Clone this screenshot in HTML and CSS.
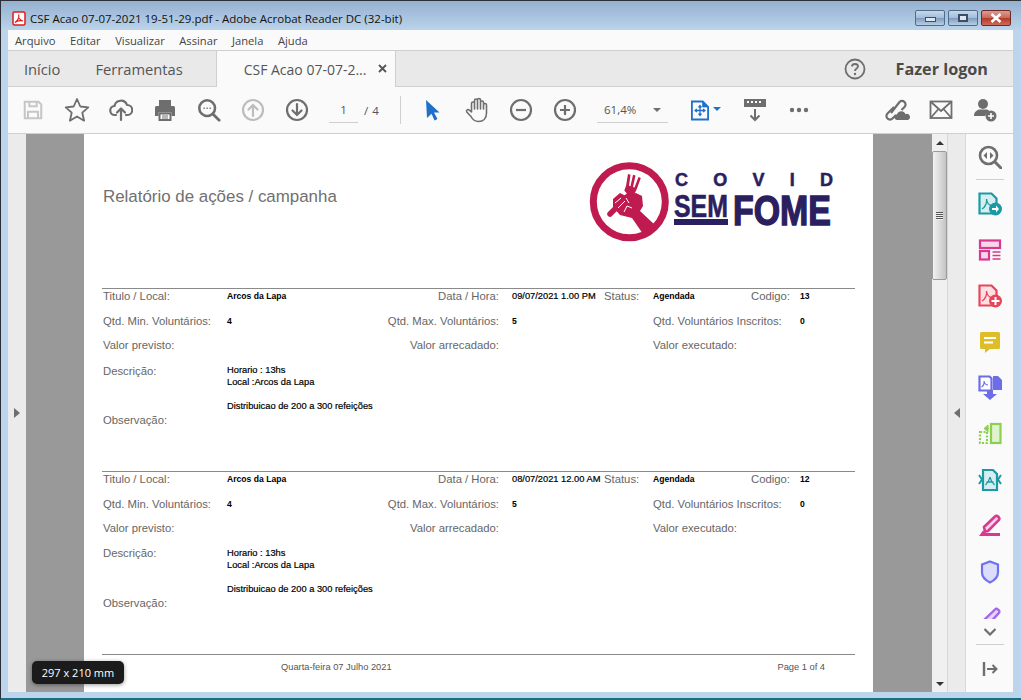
FILE: index.html
```html
<!DOCTYPE html>
<html lang="pt">
<head>
<meta charset="utf-8">
<title>CSF Acao</title>
<link rel="stylesheet" href="styles.css">
</head>
<body>
<div class="window">
  <header class="titlebar">
    <svg class="app-icon" viewBox="0 0 14 15"><rect x="1" y="1" width="12" height="13" rx="1.500" fill="#fff" stroke="#e01b1b" stroke-width="1.500"/><path d="M3 11.500C5.500 10 7.500 6.500 6.700 3.500 6.500 6.500 8 9.500 11 10 8.500 9.500 5 9.500 3 11.500Z" fill="none" stroke="#e01b1b" stroke-width="1.200"/></svg>
    <span class="title-text">CSF Acao 07-07-2021 19-51-29.pdf - Adobe Acrobat Reader DC (32-bit)</span>
    <div class="win-controls">
      <div class="win-btn"><span class="glyph-min"></span></div>
      <div class="win-btn"><span class="glyph-max"></span></div>
      <div class="win-btn win-close"><svg width="14" height="10" viewBox="0 0 14 10"><path d="M2.500 1l9 8M11.500 1l-9 8" stroke="#fff" stroke-width="2.600"/></svg></div>
    </div>
  </header>
  <nav class="menubar">
    <span>Arquivo</span><span>Editar</span><span>Visualizar</span><span>Assinar</span><span>Janela</span><span>Ajuda</span>
  </nav>
  <div class="tabbar">
    <span class="tab">Início</span>
    <span class="tab tab-tools">Ferramentas</span>
    <div class="tab-active"><span class="tab-name">CSF Acao 07-07-2...</span><svg class="tab-x" width="9" height="9" viewBox="0 0 9 9"><path d="M1 1l7 7M8 1l-7 7" stroke="#555" stroke-width="1.800"/></svg></div>
    <div class="tab-right">
      <svg class="help" width="22" height="22" viewBox="0 0 22 22"><circle cx="11" cy="11" r="9.500" fill="none" stroke="#6e6e6e" stroke-width="1.800"/><path d="M8 8.500C8 6.500 9.500 6 11 6s3 1 3 2.500c0 2-3 2-3 4.500" fill="none" stroke="#6e6e6e" stroke-width="1.800"/><circle cx="11" cy="16" r="1.200" fill="#6e6e6e"/></svg>
      <span class="login">Fazer logon</span>
    </div>
  </div>
  <div class="toolbar">
    <div class="tool"><svg width="22" height="22" viewBox="0 0 24 24" fill="none" stroke="#c6c6c6" stroke-width="2.200"><path d="M3 3h15l3 3v15H3z"/><path d="M8 3v5h8V3M6.500 21v-7h11v7"/></svg></div>
    <div class="tool"><svg width="26" height="26" viewBox="0 0 26 26" fill="none" stroke="#6e6e6e" stroke-width="1.800" stroke-linejoin="round"><path d="M13 2l3.300 7.500 8 .8-6 5.400 1.800 8L13 19.500 5.900 23.700l1.800-8-6-5.400 8-.8z"/></svg></div>
    <div class="tool"><svg width="24" height="24" viewBox="0 0 24 24" fill="none" stroke="#6e6e6e" stroke-width="2.200" stroke-linecap="round" stroke-linejoin="round"><path d="M7 17H6A4.500 4.500 0 0 1 5.500 8 6.500 6.500 0 0 1 18 7a5 5 0 0 1 .5 10H17"/><path d="M12 22V11M8 14.500l4-4 4 4"/></svg></div>
    <div class="tool"><svg width="24" height="24" viewBox="0 0 24 24"><path d="M6 2h12v6H6zM2 9.500Q2 8 3.500 8h17Q22 8 22 9.500V18h-3.500v-3.500h-13V18H2z" fill="#6e6e6e"/><path d="M6.500 15.500h11V22h-11z" fill="#fff" stroke="#6e6e6e" stroke-width="2"/><path d="M9 18h6M9 20h6" stroke="#6e6e6e"/></svg></div>
    <div class="tool"><svg width="24" height="24" viewBox="0 0 26 26" fill="none" stroke="#6e6e6e" stroke-width="2.800"><circle cx="11" cy="11" r="8.500"/><path d="M17.500 17.500l6.500 6.500" stroke-linecap="round" stroke-width="3"/><path d="M7 11h1.400M10.300 11h1.400M13.600 11H15" stroke-width="1.600"/></svg></div>
    <div class="tool"><svg width="24" height="24" viewBox="0 0 24 24" fill="none" stroke="#bdbdbd" stroke-width="2.200"><circle cx="12" cy="12" r="10"/><path d="M12 18V7M7.500 11.500L12 7l4.500 4.500" stroke-linecap="round"/></svg></div>
    <div class="tool"><svg width="24" height="24" viewBox="0 0 24 24" fill="none" stroke="#6e6e6e" stroke-width="2.200"><circle cx="12" cy="12" r="10"/><path d="M12 6v11M7.500 12.500L12 17l4.500-4.500" stroke-linecap="round"/></svg></div>
    <div class="page-nav"><span class="page-input">1</span><span class="page-total">/ 4</span></div>
    <div class="tb-sep"></div>
    <div class="tool"><svg width="16" height="22" viewBox="0 0 16 22"><path d="M1 1l13.500 12.500H9l3.500 6.500-3 1.500-3-6.700L2 19z" fill="#1f70c8"/></svg></div>
    <div class="tool"><svg width="24" height="26" viewBox="0 0 24 26" fill="none" stroke="#6e6e6e" stroke-width="1.600" stroke-linecap="round" stroke-linejoin="round"><path d="M6.500 15V6.500a1.500 1.500 0 0 1 3 0V3.500a1.500 1.500 0 0 1 3 0V3a1.500 1.500 0 0 1 3 0v2.500a1.500 1.500 0 0 1 3 0V8a1.500 1.500 0 0 1 3 0v8c0 5-3 8.500-8 8.500-4 0-6-2-7.500-5L1.800 15c-1-2 1-3.200 2.500-1.800zM9.500 6.500V12M12.500 3.500V12M15.500 5v7M18.500 7v5"/></svg></div>
    <div class="tool"><svg width="24" height="24" viewBox="0 0 24 24" fill="none" stroke="#6e6e6e" stroke-width="2.200"><circle cx="12" cy="12" r="10"/><path d="M7 12h10"/></svg></div>
    <div class="tool"><svg width="24" height="24" viewBox="0 0 24 24" fill="none" stroke="#6e6e6e" stroke-width="2.200"><circle cx="12" cy="12" r="10"/><path d="M7 12h10M12 7v10"/></svg></div>
    <div class="zoom-box"><span>61,4%</span><i class="caret"></i></div>
    <div class="fit"><svg width="18" height="21" viewBox="0 0 20 22" fill="none" stroke="#1f70c8" stroke-width="2"><path d="M1 1h12l6 6v14H1z"/><path d="M13 1v6h6" fill="#1f70c8" stroke-width="1"/><path d="M10 6v10M5 11h10M8.300 7.500L10 5.500l1.700 2M8.300 14.500L10 16.500l1.700-2M6.500 9.300L4.500 11l2 1.700M13.500 9.300l2 1.700-2 1.700" stroke-width="1.400"/></svg><i class="caret caret-blue"></i></div>
    <div class="tool tool-wide"><svg width="24" height="24" viewBox="0 0 24 24"><rect x="1" y="1" width="22" height="8" fill="#6e6e6e"/><path d="M4 4h16" stroke="#fff" stroke-width="2" stroke-dasharray="2 2"/><path d="M12 11v11M7.500 17.500L12 22l4.500-4.500" fill="none" stroke="#6e6e6e" stroke-width="2"/></svg></div>
    <div class="tool"><svg width="20" height="6" viewBox="0 0 20 6" fill="#6e6e6e"><circle cx="3" cy="3" r="2.200"/><circle cx="10" cy="3" r="2.200"/><circle cx="17" cy="3" r="2.200"/></svg></div>
    <div class="tb-right">
      <div class="tool"><svg width="26" height="24" viewBox="0 0 26 24" fill="none" stroke="#6e6e6e" stroke-width="2.200"><path d="M10 9L3.500 15.500a3.500 3.500 0 0 0 0 5 3.500 3.500 0 0 0 5 0L12 17"/><path d="M7 15l8.500-11a3.500 3.500 0 0 1 5 0 3.500 3.500 0 0 1 0 5l-3 3"/><path d="M12.500 22a3 3 0 0 1 .5-5.800 4.500 4.500 0 0 1 8.500 0A3 3 0 0 1 24 22z" fill="#6e6e6e" stroke="none"/></svg></div>
      <div class="tool"><svg width="24" height="20" viewBox="0 0 24 20" fill="none" stroke="#6e6e6e" stroke-width="1.800"><rect x="1.500" y="1.500" width="21" height="16.500"/><path d="M1.500 1.500L12 11 22.500 1.500M1.500 18l8-9M22.500 18l-8-9"/></svg></div>
      <div class="tool"><svg width="26" height="24" viewBox="0 0 26 24"><circle cx="11" cy="6" r="5" fill="#6e6e6e"/><path d="M2 18c0-4 3-6 5-6.500h8c1 .3 2 1 2.500 2A7 7 0 0 0 13 18z" fill="#6e6e6e"/><circle cx="19" cy="18" r="5.500" fill="#6e6e6e"/><path d="M16 18h6M19 15v6" stroke="#fff" stroke-width="1.600"/></svg></div>
    </div>
  </div>
  <div class="workspace">
    <div class="side-left"><i class="tri-right"></i></div>
    <main class="canvas">
      <article class="page">
        <div class="page-head">
          <h1 class="report-title">Relatório de ações / campanha</h1>
          <svg class="logo" width="270" height="100" viewBox="0 0 270 100">
            <circle cx="49.300" cy="51.700" r="36" fill="none" stroke="#bf1b50" stroke-width="7"/>
            <path d="M46 36l2-12 2.500.7-1.500 11 1.500.5 2.500-11.500 2.500.8-2.500 11.500 1.500.5 4-10.500 2.300 1-4 11-3 6.500-6-1-3.500-4z" fill="#bf1b50"/>
            <path d="M48 46L30 64" stroke="#bf1b50" stroke-width="5.500" stroke-linecap="round"/>
            <path d="M33 49l7-6 6 3 10-3 6 3 1 10-3 5 15 14-12 9-11-16-12-3-7-8z" fill="#bf1b50"/>
            <path d="M35 53l6-5M38 58l7-7M44 62l3-6 5 2M46 48l3 5" stroke="#fff" stroke-width="1" fill="none"/>
            <text class="logo-covid" x="95" y="36" textLength="158">COVID</text>
            <text class="logo-sem" x="94" y="66.500" textLength="54" lengthAdjust="spacingAndGlyphs">SEM</text>
            <rect x="94" y="69" width="54" height="6" fill="#2a2060"/>
            <text class="logo-fome" x="153" y="75" textLength="98" lengthAdjust="spacingAndGlyphs">FOME</text>
          </svg>
        </div>

        <section class="record">
          <span class="lb">Titulo / Local:</span><b class="val">Arcos da Lapa</b><span class="lb right">Data / Hora:</span><span class="date">09/07/2021 1.00 PM</span><span class="lb">Status:</span><b class="val">Agendada</b><span class="lb">Codigo:</span><b class="val">13</b>
          <span class="lb">Qtd. Min. Voluntários:</span><b class="val">4</b><span class="lb right">Qtd. Max. Voluntários:</span><b class="val pad">5</b><span class="lb inscr">Qtd. Voluntários Inscritos:</span><b class="val">0</b>
          <span class="lb c1">Valor previsto:</span><span class="lb right c3">Valor arrecadado:</span><span class="lb inscr">Valor executado:</span>
          <span class="lb c1">Descrição:</span><div class="desc">Horario : 13hs<br>Local :Arcos da Lapa<br><br>Distribuicao de 200 a 300 refeições</div>
          <span class="lb obs">Observação:</span>
        </section>

        <section class="record">
          <span class="lb">Titulo / Local:</span><b class="val">Arcos da Lapa</b><span class="lb right">Data / Hora:</span><span class="date">08/07/2021 12.00 AM</span><span class="lb">Status:</span><b class="val">Agendada</b><span class="lb">Codigo:</span><b class="val">12</b>
          <span class="lb">Qtd. Min. Voluntários:</span><b class="val">4</b><span class="lb right">Qtd. Max. Voluntários:</span><b class="val pad">5</b><span class="lb inscr">Qtd. Voluntários Inscritos:</span><b class="val">0</b>
          <span class="lb c1">Valor previsto:</span><span class="lb right c3">Valor arrecadado:</span><span class="lb inscr">Valor executado:</span>
          <span class="lb c1 lb-up">Descrição:</span><div class="desc">Horario : 13hs<br>Local :Arcos da Lapa<br><br>Distribuicao de 200 a 300 refeições</div>
          <span class="lb obs">Observação:</span>
        </section>

        <footer class="page-foot"><span class="foot-date">Quarta-feira 07 Julho 2021</span><span class="foot-page">Page 1 of 4</span></footer>
      </article>
      <div class="size-tip">297 x 210 mm</div>
    </main>
    <div class="scrollbar">
      <button class="sb-arrow"><i class="sb-up"></i></button>
      <div class="sb-track"><div class="sb-thumb"><i class="grip"></i></div></div>
      <button class="sb-arrow"><i class="sb-down"></i></button>
    </div>
    <div class="side-handle"><i class="tri-left"></i></div>
    <aside class="tools">
      <div class="rail-top"><svg width="24" height="24" viewBox="0 0 24 24" fill="none" stroke="#6e6e6e" stroke-width="2.600"><circle cx="10.500" cy="10.500" r="8.500"/><path d="M17 17l6 6" stroke-linecap="round" stroke-width="3"/><path d="M9 7l-3.500 3.500L9 14zM12 7l3.500 3.500L12 14z" fill="#6e6e6e" stroke="none"/></svg></div>
      <div class="rail-list">
        <div class="rail-item"><svg width="24" height="24" viewBox="0 0 24 24"><path d="M1.500 1.500h12l5 5v15h-17z" fill="#d6eef0" stroke="#1b9aa5" stroke-width="2.200"/><path d="M4 17c3-2 5-6 4.500-10 .5 4 3 6.500 6 7" fill="none" stroke="#1b9aa5" stroke-width="1.300"/><circle cx="17.500" cy="17" r="6.500" fill="#1b9aa5"/><path d="M14 16h4v-2.500l3 3.500-3 3.500V18h-4z" fill="#fff"/></svg></div>
        <div class="rail-item"><svg width="24" height="24" viewBox="0 0 24 24" fill="#f8d5e8" stroke="#d8388f" stroke-width="2.200"><rect x="2" y="2.500" width="20" height="7.500"/><rect x="2" y="13" width="9" height="8.500"/><path d="M14.500 14h8M14.500 17.500h8M14.500 21h8" stroke-width="1.400"/></svg></div>
        <div class="rail-item"><svg width="24" height="24" viewBox="0 0 24 24"><path d="M1.500 1.500h12l5 5v15h-17z" fill="#fde0e3" stroke="#e8455a" stroke-width="2.200"/><path d="M4 17c3-2 5-6 4.500-10 .5 4 3 6.500 6 7" fill="none" stroke="#e8455a" stroke-width="1.300"/><circle cx="17.500" cy="17" r="6.500" fill="#e8455a"/><path d="M13.500 17h8M17.500 13v8" stroke="#fff" stroke-width="2"/></svg></div>
        <div class="rail-item"><svg width="24" height="24" viewBox="0 0 24 24"><path d="M2 3.500Q2 2 3.500 2h17Q22 2 22 3.500v14q0 1.500-1.500 1.500H12l-5 4v-4H3.500Q2 19 2 17.500z" fill="#dfbd27"/><path d="M6 8h12M6 12.500h9" stroke="#fff" stroke-width="1.800"/></svg></div>
        <div class="rail-item"><svg width="24" height="26" viewBox="0 0 24 26"><path d="M1.500 1.500h10l2 2v12h-12z" fill="#fff" stroke="#6d6de8" stroke-width="2.200"/><path d="M3.500 12c1.500-1 3-3.500 2.500-6 .5 2.500 2 4 4 4" fill="none" stroke="#6d6de8" stroke-width="1.100"/><path d="M15 1h5l4 4v10H15z" fill="#6d6de8"/><path d="M9 15h6v4h4l-7 6-7-6h4z" fill="#6d6de8"/></svg></div>
        <div class="rail-item"><svg width="24" height="24" viewBox="0 0 24 24" fill="none" stroke="#8bd050" stroke-width="2.200"><rect x="13" y="2" width="9.500" height="19" fill="#dff3cf"/><path d="M2 10h7v11H2z" stroke-dasharray="2 1.500"/><path d="M10 3L6 6.500 10 10zM8 6.500h3" fill="#8bd050" stroke-width="1"/></svg></div>
        <div class="rail-item"><svg width="24" height="24" viewBox="0 0 24 24" fill="none" stroke="#1b9aa5" stroke-width="2.200"><path d="M5 2h10l4 4v16H5z" fill="#d6eef0"/><path d="M7.500 17c2-2 4-5 4.500-8 .5 3 2.500 6 4.500 8M8.500 14h7" stroke-width="1.300"/><path d="M1 7l3 4.500-3 4.500M23 7l-3 4.500 3 4.500" stroke-width="2"/></svg></div>
        <div class="rail-item"><svg width="24" height="24" viewBox="0 0 24 24"><path d="M6 13L17 2.500a2 2 0 0 1 3 0l.7.7a2 2 0 0 1 0 3L10 17l-3 .5z" fill="#f8d5e8" stroke="#d8388f" stroke-width="2.600"/><path d="M1 22l4-5.500 3 2.500h14v3z" fill="#d8388f"/></svg></div>
        <div class="rail-item"><svg width="24" height="24" viewBox="0 0 24 24"><path d="M12 1.500l8 3v8c0 5-4 8-8 10-4-2-8-5-8-10v-8z" fill="#dcdcfb" stroke="#6f72f0" stroke-width="2.200"/></svg></div>
        <div class="rail-item"><svg width="24" height="24" viewBox="0 0 24 24"><path d="M5 15L17 3.500a2 2 0 0 1 3 0l.7.7a2 2 0 0 1 0 3L9 20l-4 1z" fill="#e6d3f8" stroke="#a268e8" stroke-width="2.400"/></svg></div>
      </div>
      <div class="rail-more"><svg width="14" height="8" viewBox="0 0 14 8" fill="none" stroke="#6e6e6e" stroke-width="2.200"><path d="M1.500 1L7 6.500 12.500 1"/></svg></div>
      <div class="rail-foot"><svg width="16" height="16" viewBox="0 0 16 16" fill="none" stroke="#6e6e6e" stroke-width="2"><path d="M2 1v14" stroke-width="2.400"/><path d="M5 8h9M10.500 4L14.500 8l-4 4"/></svg></div>
    </aside>
  </div>
</div>
</body>
</html>
```

FILE: styles.css
```css
* { box-sizing: border-box; }
html, body { margin: 0; height: 100%; }
body { width: 1021px; height: 700px; overflow: hidden; background: #b9d2ea; font-family: "Open Sans", "Noto Sans", sans-serif; }
.window { width: 1021px; height: 700px; display: flex; flex-direction: column; border-top: 1px solid #2b3036; border-left: 1px solid #2b3036; border-bottom: 2px solid #1d6f80; background: linear-gradient(#94b1cf 0, #bcd5ec 30px); padding: 0 7px 6px 7px; }

.titlebar { height: 29px; flex: none; display: flex; align-items: center; padding-top: 6px; }
.app-icon { width: 14px; height: 15px; margin-left: 4px; margin-right: 4px; }
.title-text { font-size: 11.500px; color: #111; white-space: nowrap; }
.win-controls { margin-left: auto; display: flex; gap: 3px; margin-right: 3px; align-self: flex-start; margin-top: 3px; }
.win-btn { width: 30px; height: 16px; border: 1px solid #4f6b8c; border-radius: 2px; background: linear-gradient(#c5d8ec 0, #a4bdd8 48%, #7f9cbc 52%, #b8cfe6 100%); display: flex; align-items: center; justify-content: center; }
.win-close { background: linear-gradient(#dd9b90 0, #c9695a 48%, #b23a2c 52%, #cf6a58 100%); border-color: #6d2a26; }
.glyph-min { width: 11px; height: 5px; border: 1px solid #3d4f66; background: #dbe6f2; margin-top: 3px; }
.glyph-max { width: 10px; height: 8px; border: 2px solid #3d4f66; background: #dbe6f2; }

.menubar { height: 21px; flex: none; background: #fafafa; display: flex; gap: 14.500px; align-items: center; padding-left: 7px; padding-top: 1px; font-size: 11.200px; color: #444; border-bottom: 1px solid #cfcfcf; margin-right: 1px; }
.tabbar { height: 36px; flex: none; background: #e9e9e9; display: flex; align-items: center; border-bottom: 1px solid #cfcfcf; font-size: 14.700px; color: #555; margin-right: 1px; }
.tab { margin-left: 16px; white-space: nowrap; }
.tab-tools { margin-left: 35px; }
.tab-active { width: 180px; height: 36px; margin-left: 33px; margin-bottom: -1px; background: #fafafa; border-left: 1px solid #cfcfcf; border-right: 1px solid #cfcfcf; display: flex; align-items: center; padding-left: 27px; color: #555; position: relative; font-size: 14px; }
.tab-name { white-space: nowrap; }
.tab-x { position: absolute; right: 8px; top: 13px; }
.tab-right { margin-left: auto; display: flex; align-items: center; gap: 30px; padding-right: 25px; }
.help { display: block; }
.login { font-size: 16.200px; font-weight: 700; color: #4a4a4a; white-space: nowrap; }

.toolbar { height: 47px; flex: none; background: #fafafa; display: flex; align-items: center; padding-left: 3px; border-bottom: 1px solid #cfcfcf; margin-right: 1px; }
.tool { width: 44px; flex: none; display: flex; align-items: center; justify-content: center; }
.tool svg { display: block; }
.page-nav { width: 71px; display: flex; align-items: center; font-size: 11.500px; color: #555; flex: none; margin-left: 10px; }
.page-input { width: 29px; height: 26px; text-align: center; border-bottom: 1px solid #cfcfcf; line-height: 26px; }
.page-total { margin-left: 6px; word-spacing: 1px; }
.tb-sep { width: 1px; height: 28px; background: #cfcfcf; flex: none; margin-right: 10px; }
.zoom-box { width: 71px; height: 26px; margin-left: 10px; flex: none; border-bottom: 1px solid #cfcfcf; display: flex; align-items: center; padding-left: 7px; font-size: 11.500px; color: #555; position: relative; }
.caret { width: 0; height: 0; border-left: 4px solid transparent; border-right: 4px solid transparent; border-top: 4px solid #6e6e6e; position: absolute; right: 7px; top: 11px; }
.fit { width: 36px; margin-left: 23px; flex: none; display: flex; align-items: center; position: relative; height: 26px; }
.fit svg { display: block; }
.caret-blue { border-top-color: #1f70c8; right: 6px; top: 10px; }
.tool-wide { margin-left: 6px; }
.tb-right { margin-left: auto; display: flex; padding-right: 6px; }

.workspace { flex: 1; min-height: 0; display: flex; margin-right: 1px; }
.side-left { width: 18px; flex: none; background: #ebebeb; display: flex; align-items: center; justify-content: center; }
.tri-right { width: 0; height: 0; border-top: 5px solid transparent; border-bottom: 5px solid transparent; border-left: 6px solid #6e6e6e; }
.canvas { flex: 1; min-width: 0; background: #999; padding: 0 59px 0 58px; overflow: hidden; position: relative; }
.page { background: #fff; height: 100%; padding: 0 18px; font-family: "Liberation Sans", Arial, sans-serif; }
.page-head { height: 154px; display: flex; justify-content: space-between; }
.report-title { margin: 54px 0 0 1px; font-size: 16.900px; font-weight: 400; color: #707070; line-height: 18px; white-space: nowrap; }
.logo { display: block; margin: 16px 5px 0 0; flex: none; }
.logo text { font-family: "Liberation Sans", Arial, sans-serif; font-weight: 700; fill: #2a2060; stroke: #2a2060; }
.logo-covid { font-size: 18px; stroke-width: .5; }
.logo-sem { font-size: 32px; stroke-width: .6; }
.logo-fome { font-size: 42px; stroke-width: 1.400; }

.record { height: 183px; border-top: 1px solid #8a8a8a; display: grid; grid-template-columns: 124px 153px 119px 105px 49px 98px 49px 1fr; grid-template-rows: 25px 24px 26px 49px 14px; padding-left: 1px; align-content: start; }
.lb { font-size: 11.300px; line-height: 14px; color: #666; white-space: nowrap; }
.lb-up { margin-top: -1px; }
.val { font-size: 8.600px; line-height: 14px; color: #000; font-weight: 700; white-space: nowrap; }
.date { font-size: 9.300px; line-height: 14px; color: #000; padding-left: 13px; white-space: nowrap; -webkit-text-stroke: 0.2px #000; }
.pad { padding-left: 13px; }
.right { text-align: right; }
.c1 { grid-column: 1; }
.c3 { grid-column: 3; }
.inscr { grid-column: 6 / span 2; }
.desc { grid-column: 2 / span 7; grid-row: 4 / span 2; font-size: 9.300px; line-height: 12px; color: #000; white-space: nowrap; -webkit-text-stroke: 0.2px #000; }
.obs { grid-column: 1; grid-row: 5; }
.page-foot { border-top: 1px solid #8a8a8a; display: flex; font-size: 9.300px; color: #555; padding-top: 7px; padding-left: 179px; padding-right: 30px; justify-content: space-between; white-space: nowrap; }

.size-tip { position: absolute; left: 6px; top: 527px; width: 92px; height: 23px; background: #1b1b1b; color: #fff; border-radius: 5px; font-size: 11px; display: flex; align-items: center; justify-content: center; box-shadow: 0 1px 4px rgba(0,0,0,.4); }

.scrollbar { width: 16px; flex: none; background: #f0f0f0; display: flex; flex-direction: column; border-right: 1px solid #d8d8d8; }
.sb-arrow { height: 17px; padding: 0; border: 0; background: #f0f0f0; display: flex; align-items: center; justify-content: center; flex: none; }
.sb-up { width: 0; height: 0; border-left: 4px solid transparent; border-right: 4px solid transparent; border-bottom: 4px solid #333; }
.sb-down { width: 0; height: 0; border-left: 4px solid transparent; border-right: 4px solid transparent; border-top: 4px solid #333; }
.sb-track { flex: 1; }
.sb-thumb { height: 129px; border: 1px solid #9a9a9a; border-radius: 2px; background: linear-gradient(90deg, #f2f2f2, #d6d6d6 60%, #c4c4c4); display: flex; align-items: center; justify-content: center; }
.grip { width: 7px; height: 8px; background: repeating-linear-gradient(#555 0 1px, #eee 1px 2px); }
.side-handle { width: 18px; flex: none; background: #ebebeb; display: flex; align-items: center; justify-content: center; border-right: 1px solid #d8d8d8; }
.tri-left { width: 0; height: 0; border-top: 5px solid transparent; border-bottom: 5px solid transparent; border-right: 6px solid #6e6e6e; }

.tools { width: 47px; flex: none; background: #fafafa; display: flex; flex-direction: column; }
.rail-top { height: 46px; flex: none; display: flex; align-items: center; justify-content: center; position: relative; }
.rail-top::after { content: ""; position: absolute; left: 10px; right: 9px; bottom: 0; height: 1px; background: #cfcfcf; }
.rail-list { height: 439px; flex: none; overflow: hidden; padding-top: 1px; }
.rail-item { height: 46px; display: flex; align-items: center; justify-content: center; }
.rail-item svg { display: block; }
.rail-more { height: 25px; flex: none; display: flex; align-items: center; justify-content: center; }
.rail-foot { flex: 1; display: flex; align-items: center; justify-content: center; border-top: 1px solid #cfcfcf; margin: 0 9px 0 10px; }
```
